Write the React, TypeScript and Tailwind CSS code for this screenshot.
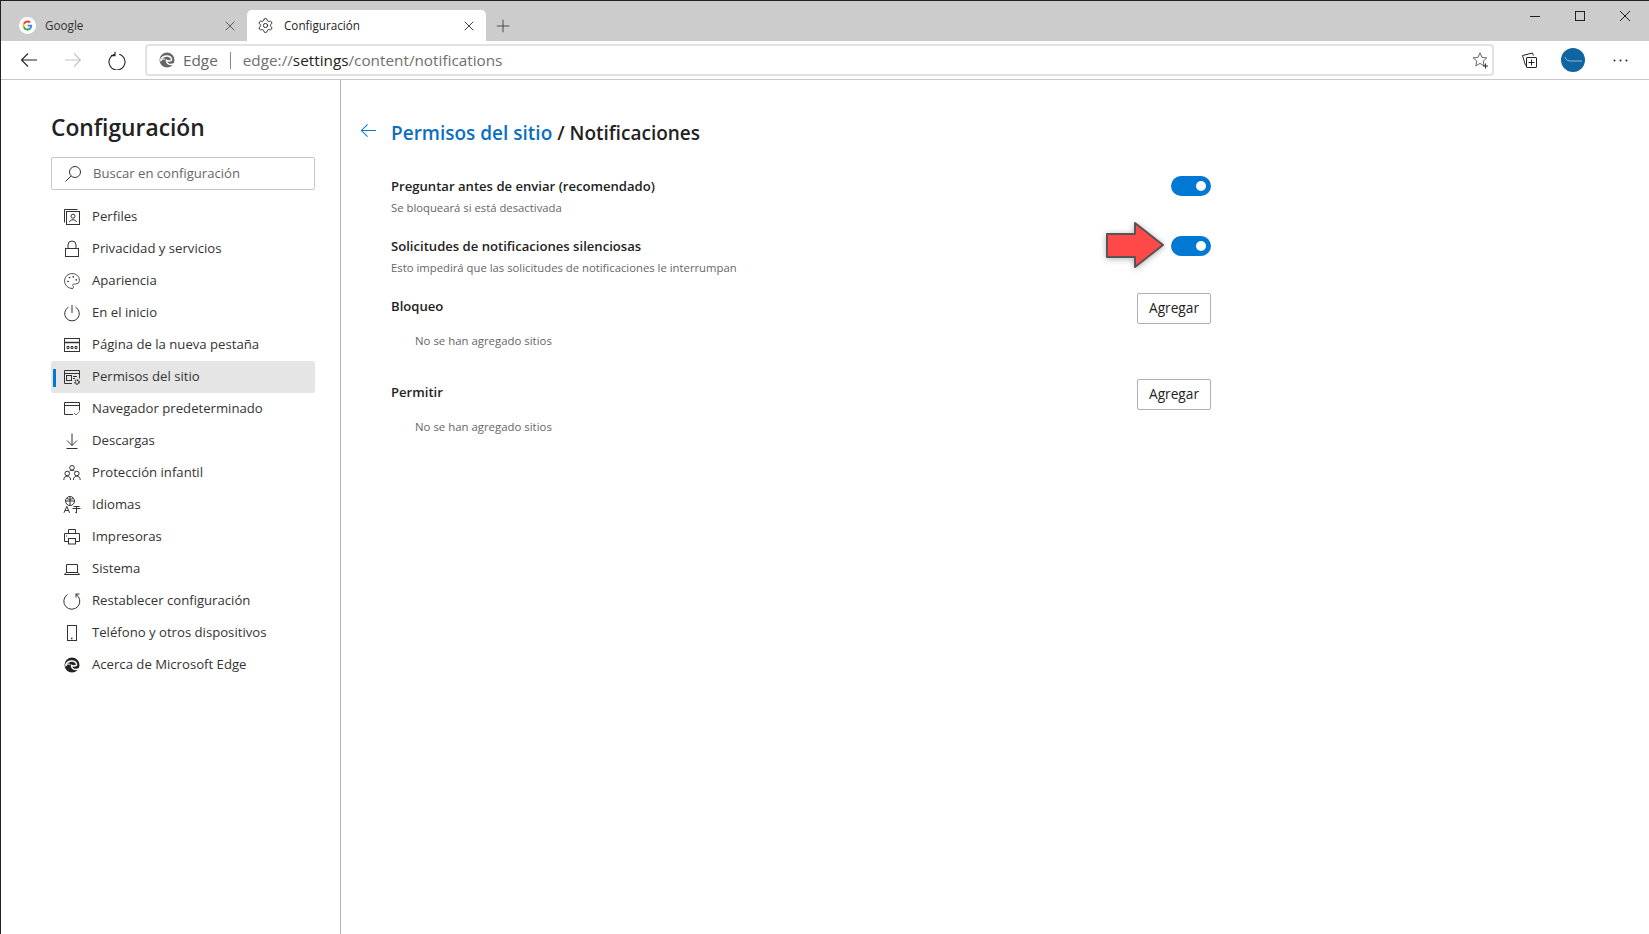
import React from "react";
import { X, Plus, Palette, Settings } from "lucide-react";

const font = "font-['Open_Sans','Noto_Sans',sans-serif]";

function Ico({ children }: { children: React.ReactNode }) {
  return (
    <svg width="18" height="18" viewBox="0 0 18 18" fill="none" stroke="#333" strokeWidth="1">
      {children}
    </svg>
  );
}

function EdgeLogo({ size = 16, color = "#333" }: { size?: number; color?: string }) {
  return (
    <svg width={size} height={size} viewBox="0 0 16 16">
      <circle cx="8" cy="8" r="7.5" fill={color} />
      <path d="M1.500 8.500C2.500 5 6 3.500 8.500 4c2.500.4 4 2 4 3.600 0 1-1 1.400-2.400 1.400-1.600 0-2.600-.6-2.600-.6 0 2.400 2 4.200 4.600 4.200 1 0 2-.2 3-.9" fill="none" stroke="#fff" strokeWidth="1.500" />
      <path d="M1.500 9.500C2.500 7 5 6.400 6 7.400" fill="none" stroke="#fff" strokeWidth="1" />
    </svg>
  );
}

function GoogleLogo() {
  return (
    <svg width="17" height="17" viewBox="0 0 17 17">
      <circle cx="8.500" cy="8.500" r="8.500" fill="#fff" />
      <g transform="translate(3.500 3.500) scale(0.2083)">
        <path fill="#EA4335" d="M24 9.500c3.500 0 6.700 1.300 9.100 3.500l6.800-6.800C35.800 2.400 30.200 0 24 0 14.600 0 6.500 5.400 2.600 13.200l7.900 6.100C12.400 13.700 17.700 9.500 24 9.500z" />
        <path fill="#4285F4" d="M46.500 24.500c0-1.600-.1-3.100-.4-4.500H24v9h12.700c-.6 2.900-2.200 5.400-4.700 7l7.600 5.900c4.400-4.100 6.900-10.100 6.900-17.400z" />
        <path fill="#FBBC05" d="M10.500 28.700C10 27.200 9.800 25.700 9.800 24s.3-3.200.7-4.700l-7.900-6.100C.9 16.400 0 20.100 0 24s.9 7.600 2.600 10.800l7.900-6.100z" />
        <path fill="#34A853" d="M24 48c6.500 0 11.900-2.100 15.900-5.800L32.300 36.300c-2.100 1.400-4.900 2.300-8.300 2.300-6.300 0-11.600-4.200-13.500-9.900l-7.900 6.100C6.500 42.600 14.600 48 24 48z" />
      </g>
    </svg>
  );
}

function ThinArrow({ color, flip = false, size = 18 }: { color: string; flip?: boolean; size?: number }) {
  return (
    <svg width={size} height={size} viewBox="0 0 18 18" fill="none" stroke={color} strokeWidth="1.100" className={flip ? "-scale-x-100" : ""}>
      <path d="M1.500 9H17M8 2.500 1.500 9 8 15.500" />
    </svg>
  );
}

const navItems: { label: string; icon: React.ReactNode; active?: boolean }[] = [
  { label: "Perfiles", icon: <Ico><rect x="3.500" y="3.500" width="13" height="13" /><path d="M1.500 14.500V1.500h13" /><circle cx="10" cy="8.200" r="2" /><path d="M6.500 14c.5-3 6.500-3 7 0" /></Ico> },
  { label: "Privacidad y servicios", icon: <Ico><rect x="2.500" y="8.500" width="13" height="8" /><path d="M5 8.500V5a4 4 0 0 1 8 0v3.500" /></Ico> },
  { label: "Apariencia", icon: <Palette size={18} strokeWidth={1.100} color="#333" /> },
  { label: "En el inicio", icon: <Ico><path d="M5.500 3.200a7.300 7.300 0 1 0 7 0" /><path d="M9 1v8" /></Ico> },
  { label: "Página de la nueva pestaña", icon: <Ico><rect x="1.500" y="2.500" width="15" height="13" /><path d="M1.500 6.500h15" strokeWidth="1.500" /><path d="M4 10.500h2v2H4zM8 10.500h2v2H8zM12 10.500h2v2h-2z" /></Ico> },
  { label: "Permisos del sitio", active: true, icon: <Ico><path d="M9 15.500H1.500v-13h15v8" /><path d="M1.500 5.500h15" /><rect x="3.500" y="7.500" width="5" height="5" /><path d="M10 8.500h4M10 10.500h2" /><circle cx="14" cy="14" r="2" strokeWidth="1.600" strokeDasharray="1.500 .6" /></Ico> },
  { label: "Navegador predeterminado", icon: <Ico><path d="M10 14.500H1.500v-12h15v8" /><path d="M1.500 5.500h15" /><path d="M11 13l2 2 3.500-3.500" stroke="#777" /></Ico> },
  { label: "Descargas", icon: <Ico><path d="M9 1.500v12M4 8.500 9 13.500l5-5M3.500 16.500h11" /></Ico> },
  { label: "Protección infantil", icon: <Ico><circle cx="9" cy="3.800" r="2.300" /><circle cx="4.200" cy="9.500" r="2.300" /><circle cx="13.800" cy="9.500" r="2.300" /><path d="M.8 16c0-2.500 1.500-3.800 3.400-3.800S7.600 13.500 7.600 16M10.400 16c0-2.500 1.500-3.800 3.400-3.800s3.400 1.300 3.400 3.800M6.500 7c.8-.8 4.200-.8 5 0" /></Ico> },
  { label: "Idiomas", icon: <Ico><circle cx="7" cy="5" r="4.500" /><path d="M2.500 5h9M7 .5v9M4 2.500c1.500 1 4.500 1 6 0" /><path d="M1 16.800l2.800-6.500 2.800 6.500M2 14.500h3.600M9.500 12.500h8M13.500 10.500v6.500l-1.200-.5M10.500 10.500h6" /></Ico> },
  { label: "Impresoras", icon: <Ico><path d="M5.500 5.500v-4h7v4" /><path d="M5 13.500H1.500v-8h15v8H13" /><rect x="5.500" y="10.500" width="7" height="5.500" /><path d="M3 8h1" /></Ico> },
  { label: "Sistema", icon: <Ico><path d="M3.500 12.500v-8h11v8M1.500 14.500l1.500-2h12l1.500 2z" /></Ico> },
  { label: "Restablecer configuración", icon: <Ico><path d="M12.800 2.300A8 8 0 1 1 4.500 2.500" /><path d="M13 5.500V2H16.500" /></Ico> },
  { label: "Teléfono y otros dispositivos", icon: <Ico><rect x="4.500" y="1.500" width="9" height="15" /><path d="M8 14.500h1.500" strokeWidth="1.300" /></Ico> },
  { label: "Acerca de Microsoft Edge", icon: <EdgeLogo size={16} color="#222" /> },
];

function Toggle() {
  return (
    <div className="flex h-5 w-10 items-center justify-end rounded-full bg-[#0078d4] pr-[5px]">
      <div className="h-[10px] w-[10px] rounded-full bg-white" />
    </div>
  );
}

function AddButton() {
  return (
    <button className="h-[31px] w-[74px] rounded-[2px] border border-[#b0b0b0] bg-white text-[13.700px] text-[#222]">
      Agregar
    </button>
  );
}

function Row({ title, sub, className = "" }: { title: string; sub: string; className?: string }) {
  return (
    <div className={`flex justify-between ${className}`}>
      <div>
        <div className="text-[13.100px] font-semibold leading-[20px] text-[#222]">{title}</div>
        <div className="mt-[4px] text-[11.300px] leading-[16px] text-[#666]">{sub}</div>
      </div>
      <Toggle />
    </div>
  );
}

function Section({ title }: { title: string }) {
  return (
    <div>
      <div className="flex h-[31px] items-center justify-between">
        <div className="mb-[4px] text-[13.100px] font-semibold text-[#222]">{title}</div>
        <AddButton />
      </div>
      <div className="ml-[24px] mt-[9px] text-[11.400px] leading-[16px] text-[#666]">No se han agregado sitios</div>
    </div>
  );
}

export default function App() {
  return (
    <div className={`${font} flex h-[934px] w-[1649px] flex-col overflow-hidden border-l border-t border-[#222] bg-white text-[#1f1f1f]`}>
      {/* Title bar */}
      <div className="flex h-[40px] shrink-0 items-end bg-[#cccccc]">
        <div className="flex h-[31px] w-[246px] items-center pl-[18px] pr-[9px] text-[11.700px] text-[#333]">
          <GoogleLogo />
          <span className="ml-[9px] flex-1">Google</span>
          <X size={16} strokeWidth={1.100} />
        </div>
        <div className="flex h-[31px] w-[239px] items-center rounded-t-[5px] bg-white pl-[10px] pr-[9px] text-[11.700px] text-[#222]">
          <Settings size={17} strokeWidth={1.300} />
          <span className="ml-[10px] flex-1">Configuración</span>
          <X size={16} strokeWidth={1.300} />
        </div>
        <div className="flex h-[31px] w-[34px] items-center justify-center">
          <Plus size={20} strokeWidth={1} color="#333" />
        </div>
        <div className="h-full flex-1" />
        <div className="flex h-full items-start gap-[25px] pr-[14px] pt-[5px] text-[#222]">
          <svg width="20" height="20" viewBox="0 0 20 20" stroke="currentColor" fill="none" strokeWidth="1"><path d="M5 10.500h10" /></svg>
          <svg width="20" height="20" viewBox="0 0 20 20" stroke="currentColor" fill="none" strokeWidth="1"><rect x="5.500" y="5.500" width="9" height="9" /></svg>
          <svg width="20" height="20" viewBox="0 0 20 20" stroke="currentColor" fill="none" strokeWidth="1"><path d="M5 5l10 10M15 5 5 15" /></svg>
        </div>
      </div>
      {/* Toolbar */}
      <div className="flex h-[39px] shrink-0 items-center border-b border-[#c8c8c8] bg-white">
        <div className="flex w-[144px] items-center gap-[26px] pl-[19px]">
          <ThinArrow color="#222" />
          <ThinArrow color="#c4c4c4" flip />
          <svg width="18" height="19" viewBox="0 0 18 19" fill="none" stroke="#222" strokeWidth="1.100">
            <path d="M6.800 3.300a8 8 0 1 0 4.400 0" />
            <path d="M7 .8v3.800H3" />
          </svg>
        </div>
        <div className="flex h-[32px] w-[1349px] items-center rounded-[4px] border-2 border-[#e2e2e2] bg-white pl-[12px] pr-[2px] text-[15.300px]">
          <EdgeLogo size={16} color="#666" />
          <span className="ml-[8px] text-[#666]">Edge</span>
          <span className="mx-[12px] h-[17px] w-px bg-[#888]" />
          <span className="flex-1 text-[#6f6f6f]">
            edge://<span className="text-[#222]">settings</span>/content/notifications
          </span>
          <svg width="18" height="18" viewBox="0 0 18 18" fill="none" stroke="#666" strokeWidth="1">
            <path d="M8 1.800l2 4.600 4.800.5-3.600 3.200 1 4.800-4.200-2.500-4.200 2.500 1-4.800L1.200 6.900l4.800-.5z" />
            <path d="M13.500 12.500v5M11 15h5" stroke="#333" />
          </svg>
        </div>
        <div className="flex flex-1 items-center pl-[27px]">
          <svg width="17" height="17" viewBox="0 0 17 17" fill="none" stroke="#222">
            <path d="M4.500 13.500 1.500 3.500l10-2.500.8 2.500" />
            <rect x="5.500" y="5.500" width="10" height="10" rx="0.500" fill="#fff" />
            <path d="M10.500 7.500v6M7.500 10.500h6" />
          </svg>
          <svg width="24" height="24" viewBox="0 0 24 24" className="ml-[23px]">
            <circle cx="12" cy="12" r="12" fill="#0f659f" />
            <path d="M4 9c1 2.500 2 3.500 4 3.800M8 13h8M16 13h5" stroke="#a9cfe6" strokeWidth="0.800" fill="none" />
          </svg>
          <svg width="19" height="19" viewBox="0 0 19 19" fill="#222" className="ml-[26px]">
            <circle cx="3.500" cy="9.500" r="1" />
            <circle cx="9.500" cy="9.500" r="1" />
            <circle cx="15.500" cy="9.500" r="1" />
          </svg>
        </div>
      </div>
      {/* Body */}
      <div className="flex min-h-0 flex-1">
        <aside className="h-full w-[340px] shrink-0 border-r border-[#b5b5b5] pl-[50px] pr-[23px] pt-[33px]">
          <h1 className="text-[22.800px] font-semibold leading-[30px] text-[#222]">Configuración</h1>
          <div className="mt-[14px] flex h-[33px] w-[264px] items-center rounded-[2px] border border-[#c8c8c8] pl-[12px] text-[13.100px] text-[#666]">
            <svg width="18" height="18" viewBox="0 0 18 18" fill="none" stroke="#333" strokeWidth="1">
              <circle cx="11" cy="7" r="5.500" />
              <path d="M7 11 1.500 16.500" />
            </svg>
            <span className="ml-[11px]">Buscar en configuración</span>
          </div>
          <nav className="mt-[11px] flex w-[264px] flex-col">
            {navItems.map((it) => (
              <div key={it.label} className={`relative flex h-8 shrink-0 items-center rounded-[2px] pl-[12px] text-[13.150px] text-[#333] ${it.active ? "bg-[#e5e5e5]" : ""}`}>
                {it.active && <span className="absolute left-[2px] top-[8px] h-[18px] w-[3px] bg-[#0078d4]" />}
                <span className="flex w-[18px] items-center justify-center">{it.icon}</span>
                <span className="ml-[11px]">{it.label}</span>
              </div>
            ))}
          </nav>
        </aside>
        <main className="flex-1 pl-[19px] pt-[35px]">
          <div className="flex h-[36px] items-center">
            <span className="mb-[6px] flex"><ThinArrow color="#0078d4" size={17} /></span>
            <h2 className="ml-[14px] text-[19px] font-semibold">
              <span className="text-[#0b6fc0]">Permisos del sitio</span>
              <span className="text-[#222]"> / Notificaciones</span>
            </h2>
          </div>
          <div className="ml-[31px] w-[820px] pt-[25px]">
            <Row className="h-[60px]" title="Preguntar antes de enviar (recomendado)" sub="Se bloqueará si está desactivada" />
            <Row className="h-[57px]" title="Solicitudes de notificaciones silenciosas" sub="Esto impedirá que las solicitudes de notificaciones le interrumpan" />
            <Section title="Bloqueo" />
            <div className="mt-[30px]"><Section title="Permitir" /></div>
          </div>
        </main>
      </div>
      {/* Arrow annotation */}
      <svg className="absolute left-[1103px] top-[218px] drop-shadow-[0_1px_3px_rgba(0,0,0,0.3)]" width="66" height="54" viewBox="0 0 66 54">
        <path d="M4 16H32V5L60 27 32 49V39H4Z" fill="#ff4848" stroke="#555" strokeWidth="2" strokeLinejoin="round" />
      </svg>
    </div>
  );
}
